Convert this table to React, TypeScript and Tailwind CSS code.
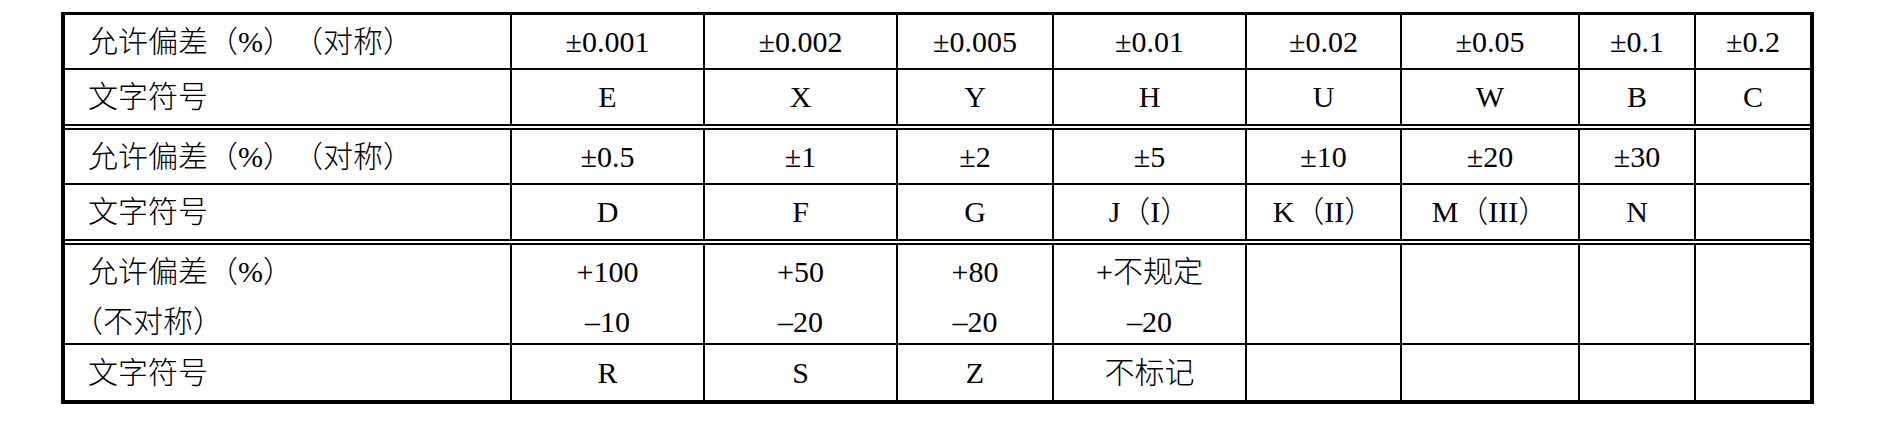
import React from "react";

const widths = [
  "w-[447px]",
  "w-[193px]",
  "w-[193px]",
  "w-[156px]",
  "w-[193px]",
  "w-[155px]",
  "w-[178px]",
  "w-[116px]",
  "w-[114px]",
];

type Row = {
  cells: React.ReactNode[];
  h: string;
  bottom: string;
};

const rows: Row[] = [
  {
    cells: ["允许偏差（%）（对称）", "±0.001", "±0.002", "±0.005", "±0.01", "±0.02", "±0.05", "±0.1", "±0.2"],
    h: "h-[55px]",
    bottom: "border-b-2",
  },
  {
    cells: ["文字符号", "E", "X", "Y", "H", "U", "W", "B", "C"],
    h: "h-[60px]",
    bottom: "border-b-[6px] border-double",
  },
  {
    cells: ["允许偏差（%）（对称）", "±0.5", "±1", "±2", "±5", "±10", "±20", "±30", ""],
    h: "h-[55px]",
    bottom: "border-b-2",
  },
  {
    cells: ["文字符号", "D", "F", "G", "J（I）", "K（II）", "M（III）", "N", ""],
    h: "h-[60px]",
    bottom: "border-b-[6px] border-double",
  },
  {
    cells: [
      <div className="flex flex-col leading-[50px] pt-[6px]">
        <span>允许偏差（%）</span>
        <span className="[text-spacing-trim:trim-start]">（不对称）</span>
      </div>,
      <div className="flex flex-col items-center leading-[50px] pt-[6px]">
        <span>+100</span>
        <span>–10</span>
      </div>,
      <div className="flex flex-col items-center leading-[50px] pt-[6px]">
        <span>+50</span>
        <span>–20</span>
      </div>,
      <div className="flex flex-col items-center leading-[50px] pt-[6px]">
        <span>+80</span>
        <span>–20</span>
      </div>,
      <div className="flex flex-col items-center leading-[50px] pt-[6px]">
        <span>+不规定</span>
        <span>–20</span>
      </div>,
      "",
      "",
      "",
      "",
    ],
    h: "h-[100px]",
    bottom: "border-b-2",
  },
  {
    cells: ["文字符号", "R", "S", "Z", "不标记", "", "", "", ""],
    h: "h-[55px]",
    bottom: "",
  },
];

export default function App() {
  return (
    <div className="w-[1888px] h-[426px] bg-white pt-[12px] pl-[61px] font-['Liberation_Serif','Noto_Sans_CJK_SC',serif] font-light text-[30px] text-black [text-spacing-trim:space-all]">
      <div className="w-[1753px] border-l-4 border-r-4 border-t-[3px] border-b-4 border-black flex flex-col">
        {rows.map((row, ri) => (
          <div key={ri} className={`flex ${row.h} ${row.bottom} border-black`}>
            {row.cells.map((c, ci) => (
              <div
                key={ci}
                className={`${widths[ci]} shrink-0 flex items-center ${
                  ci === 0 ? "justify-start pl-[23px]" : "justify-center"
                } ${ci < 8 ? "border-r-2 border-black" : ""} leading-none whitespace-nowrap`}
              >
                {c}
              </div>
            ))}
          </div>
        ))}
      </div>
    </div>
  );
}
